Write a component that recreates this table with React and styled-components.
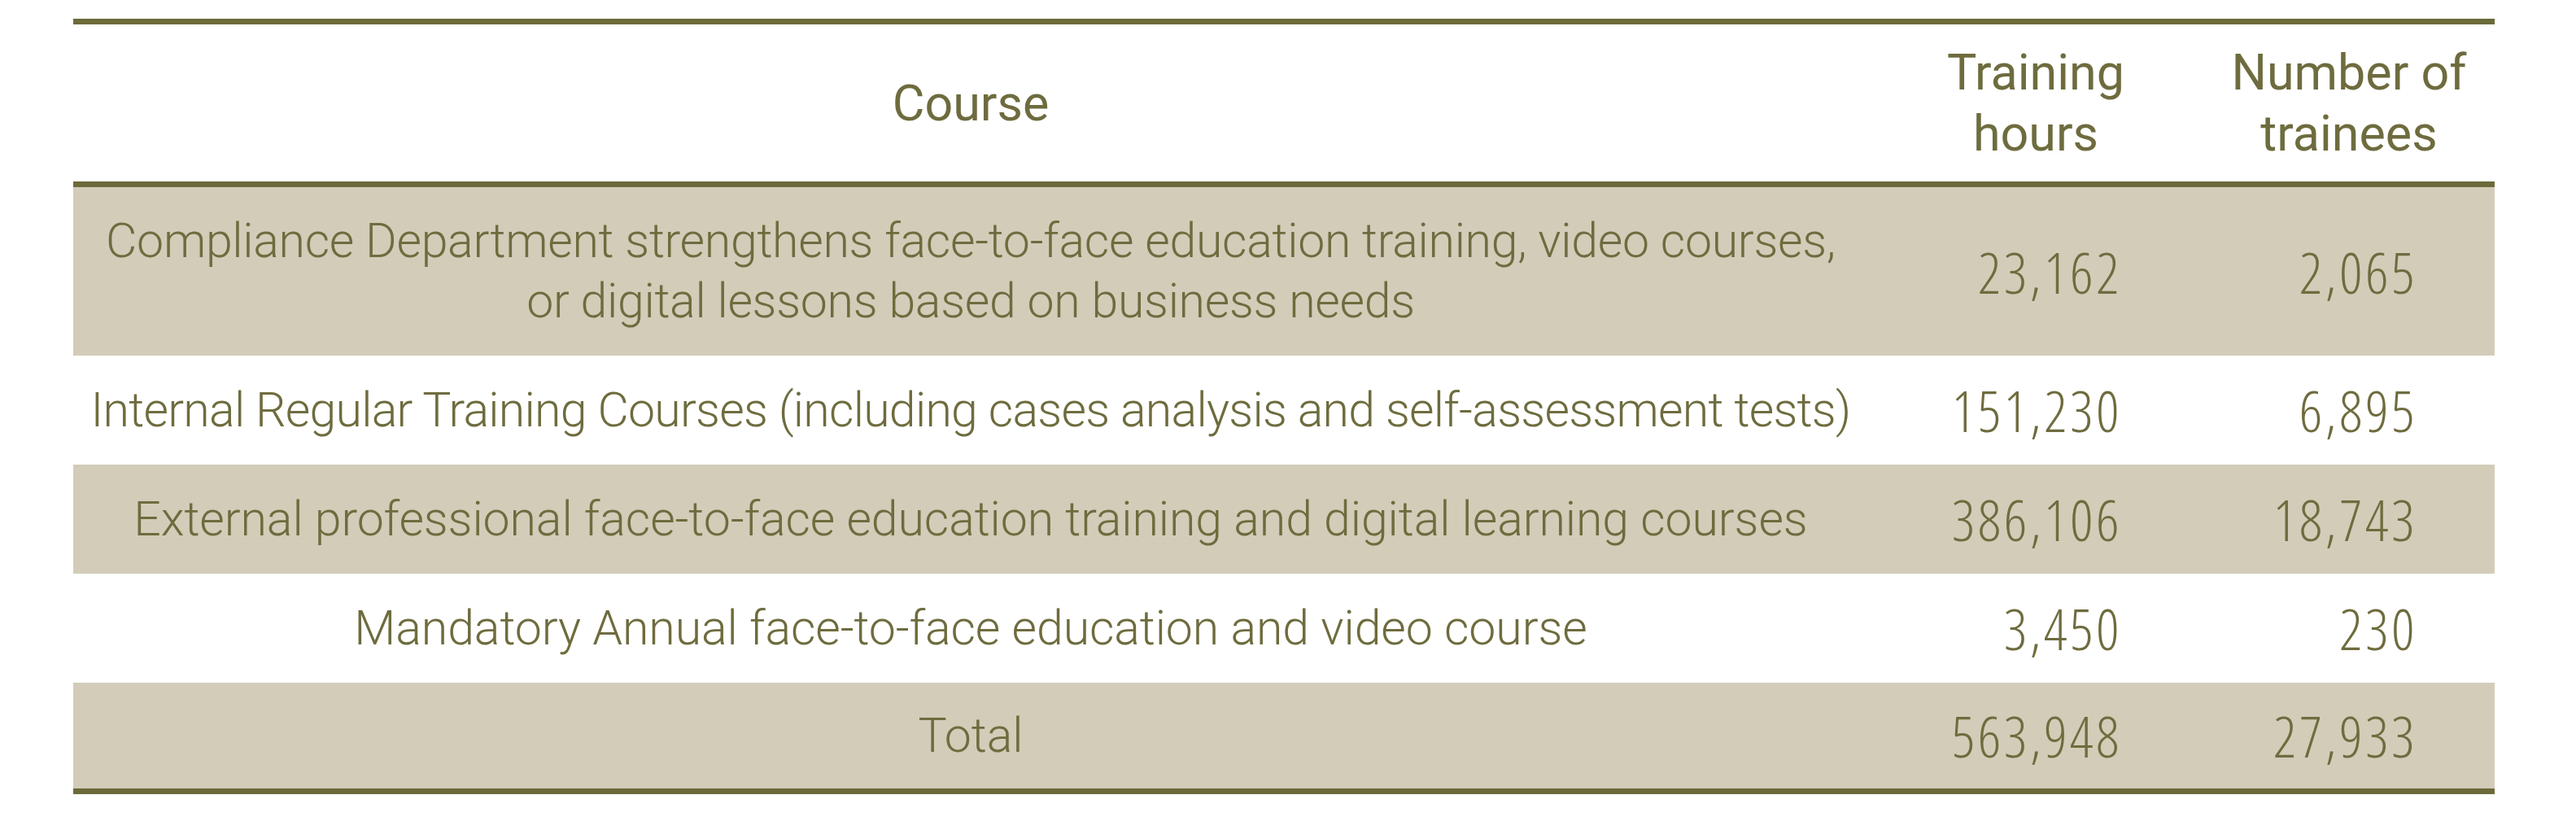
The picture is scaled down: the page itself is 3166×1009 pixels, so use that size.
import React from "react";
import styled, { createGlobalStyle } from "styled-components";

const Global = createGlobalStyle`
  html, body { margin: 0; padding: 0; background: #ffffff; }
  body { font-family: Roboto, "Open Sans", sans-serif; }
`;

const Page = styled.div`
  padding: 23px 0 0 90px;
  width: 2976px;
`;

const Table = styled.table`
  width: 2976px;
  border-collapse: collapse;
  table-layout: fixed;
  color: #6e6c3e;
  border-top: 7px solid #6b6a3a;
  border-bottom: 7px solid #6b6a3a;
`;

const HeadCell = styled.th`
  font-family: Roboto, "Open Sans", sans-serif;
  font-weight: 400;
  font-size: 61px;
  line-height: 75px;
  text-align: center;
  padding: 22px 0 21px;
  border-bottom: 7px solid #6b6a3a;
`;

const Row = styled.tr`
  background: ${(p) => (p.$shaded ? "#d2ccb9" : "#ffffff")};
  & + & > td { border-top: 4px solid #6b6a3a; }
`;

const CourseCell = styled.td`
  font-family: Roboto, "Open Sans", sans-serif;
  font-weight: 300;
  font-size: 59px;
  line-height: 74px;
  letter-spacing: ${(p) => p.$ls}px;
  text-align: center;
  white-space: nowrap;
  padding: ${(p) => p.$pad};
`;

const NumCell = styled.td`
  font-family: "Open Sans", Roboto, sans-serif;
  font-weight: 300;
  font-size: 70px;
  line-height: 74px;
  font-stretch: 75%;
  letter-spacing: 3.5px;
  text-align: right;
  padding: 0 ${(p) => p.$pad}px 0 0;
`;

const rows = [
  {
    course: ["Compliance Department strengthens face-to-face education training, video courses,", "or digital lessons based on business needs"],
    hours: "23,162",
    trainees: "2,065",
    ls: -0.3,
  },
  {
    course: ["Internal Regular Training Courses (including cases analysis and self-assessment tests)"],
    hours: "151,230",
    trainees: "6,895",
    ls: -0.75,
  },
  {
    course: ["External professional face-to-face education training and digital learning courses"],
    hours: "386,106",
    trainees: "18,743",
    ls: -0.1,
  },
  {
    course: ["Mandatory Annual face-to-face education and video course"],
    hours: "3,450",
    trainees: "230",
    ls: -0.1,
  },
  { course: ["Total"], hours: "563,948", trainees: "27,933", ls: -0.1 },
];

function padFor(i, r) {
  if (r.course.length > 1) return "29px 0 30px";
  if (i === rows.length - 1) return "28px 0 28px";
  return "30px 0 30px";
}

export default function App() {
  return (
    <Page>
      <Global />
      <Table>
        <colgroup>
          <col style={{ width: 2206 }} />
          <col style={{ width: 412 }} />
          <col style={{ width: 358 }} />
        </colgroup>
        <thead>
          <tr>
            <HeadCell>Course</HeadCell>
            <HeadCell>Training<br />hours</HeadCell>
            <HeadCell>Number of<br />trainees</HeadCell>
          </tr>
        </thead>
        <tbody>
          {rows.map((r, i) => (
            <Row key={i} $shaded={i % 2 === 0}>
              <CourseCell $pad={padFor(i, r)} $ls={r.ls}>
                {r.course.map((line, j) => (
                  <React.Fragment key={j}>
                    {j > 0 && <br />}
                    {line}
                  </React.Fragment>
                ))}
              </CourseCell>
              <NumCell $pad={100}>{r.hours}</NumCell>
              <NumCell $pad={95}>{r.trainees}</NumCell>
            </Row>
          ))}
        </tbody>
      </Table>
    </Page>
  );
}
